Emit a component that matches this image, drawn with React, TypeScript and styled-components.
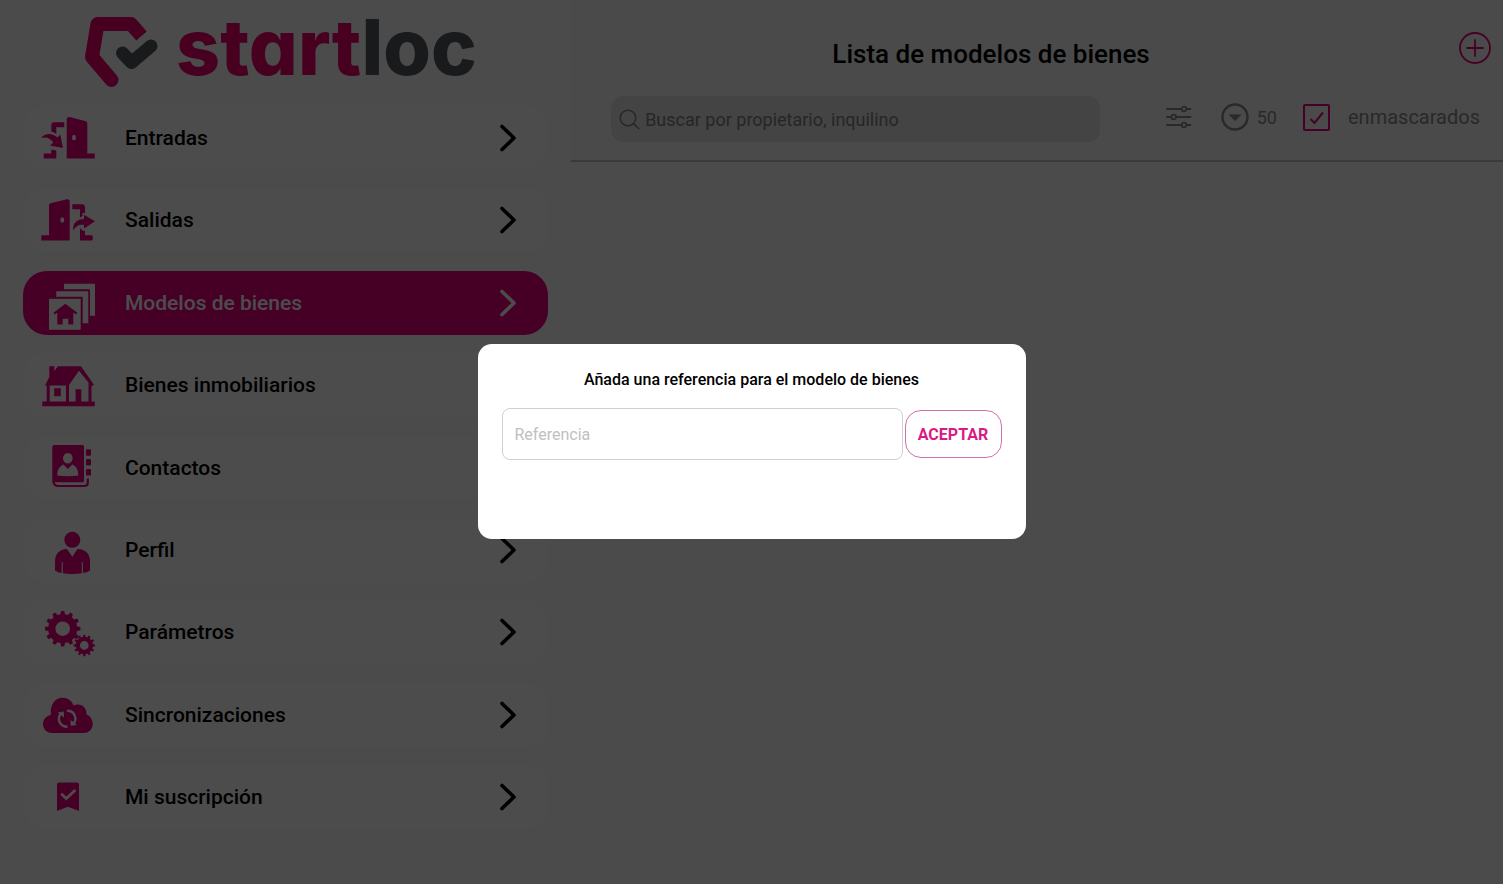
import React from "react";
import styled, { createGlobalStyle } from "styled-components";

const PINK = "#ea0080";
const LOGO_PINK = "#f0006e";
const SLATE = "#54585c";
const GRAY = "#8a8a8a";

const GlobalStyle = createGlobalStyle`
  * { box-sizing: border-box; }
  body { margin: 0; background: #fcfcfc; font-family: Roboto, "Liberation Sans", sans-serif; color: #000; }
  button, input { font-family: inherit; }
`;

const Page = styled.div`
  display: flex;
  min-height: 100vh;
`;

const Sidebar = styled.aside`
  display: flex;
  flex-direction: column;
  width: 38%;
  padding: 16px 23px 55px;
`;

const Logo = styled.div`
  display: flex;
  align-items: flex-start;
  gap: 18px;
  height: 90px;
  padding-left: 61px;
`;

const Wordmark = styled.span`
  font-family: Inter, sans-serif;
  font-size: 77px;
  line-height: 62px;
  font-weight: 800;
  font-feature-settings: "cv11";
  color: ${LOGO_PINK};
`;

const WordmarkEnd = styled.span`
  color: ${SLATE};
`;

const Menu = styled.nav`
  display: flex;
  flex: 1;
  flex-direction: column;
  justify-content: space-between;
`;

const MenuItem = styled.a<{ $active?: boolean }>`
  display: flex;
  align-items: center;
  gap: 28px;
  height: 64px;
  padding: 0 32px 0 18px;
  border-radius: 24px;
  font-size: 21px;
  font-weight: 500;
  text-decoration: none;
  color: ${(p) => (p.$active ? "#fff" : "#000")};
  background: ${(p) => (p.$active ? PINK : "#fff")};
`;

const MenuLabel = styled.span`
  flex: 1;
`;

const Main = styled.main`
  flex: 1;
  min-width: 0;
`;

const Header = styled.header`
  padding: 32px 0 18px;
  background: #f7f7f7;
  border-bottom: 2px solid #c4c4c4;
`;

const TitleRow = styled.div`
  display: flex;
  align-items: flex-start;
`;

const Title = styled.h1`
  flex: 1;
  margin: 0;
  padding-top: 6px;
  font-size: 26px;
  line-height: 32px;
  font-weight: 500;
  text-align: center;
`;

const AddSlot = styled.div`
  display: flex;
  justify-content: flex-end;
  width: 92px;
  padding-right: 12px;
`;

const IconButton = styled.button`
  display: flex;
  padding: 0;
  border: 0;
  background: none;
`;

const Filters = styled.div`
  display: flex;
  align-items: center;
  padding: 26px 23px 0 40px;
`;

const SearchBox = styled.label`
  display: flex;
  flex: 1;
  align-items: center;
  gap: 5px;
  height: 46px;
  padding: 0 8px;
  border-radius: 12px;
  background: #e4e4e4;
`;

const SearchInput = styled.input`
  flex: 1;
  min-width: 0;
  padding: 0;
  border: 0;
  outline: 0;
  background: none;
  font-size: 18px;
  &::placeholder { color: #808080; opacity: 1; }
`;

const FilterTools = styled.div`
  display: flex;
  align-items: center;
  height: 42px;
  margin: 0 0 4px 66px;
  color: ${GRAY};
`;

const PageSize = styled.button`
  display: flex;
  align-items: center;
  gap: 8px;
  margin: 0 26px 0 29px;
  padding: 0;
  border: 0;
  background: none;
  font-size: 18px;
  color: ${GRAY};
`;

const MaskLabel = styled.label`
  display: flex;
  align-items: center;
  gap: 18px;
  font-size: 20px;
`;

const CheckHolder = styled.span`
  display: grid;
  width: 27px;
  height: 27px;
  > * { grid-area: 1 / 1; }
`;

const CheckInput = styled.input`
  appearance: none;
  width: 27px;
  height: 27px;
  margin: 0;
  border: 2px solid ${PINK};
  border-radius: 2px;
`;

const Overlay = styled.div`
  position: fixed;
  inset: 0;
  display: flex;
  align-items: center;
  justify-content: center;
  padding-bottom: 2px;
  background: rgba(0, 0, 0, 0.7);
`;

const Dialog = styled.form`
  width: 548px;
  max-width: 92vw;
  padding: 24px 24px 79px;
  border-radius: 14px;
  background: #fff;
`;

const DialogTitle = styled.h2`
  margin: 0 0 16px;
  font-size: 16px;
  line-height: 24px;
  font-weight: 500;
  text-align: center;
`;

const DialogRow = styled.div`
  display: flex;
  align-items: center;
  gap: 2px;
`;

const ReferenceInput = styled.input`
  flex: 1;
  min-width: 0;
  height: 52px;
  padding: 2px 12px 0;
  border: 1px solid #d0d0d0;
  border-radius: 8px;
  outline: 0;
  font-size: 16px;
  &::placeholder { color: #c0c0c0; opacity: 1; }
`;

const AcceptButton = styled.button`
  width: 97px;
  height: 48px;
  padding: 2px 0 0;
  border: 1px solid #cf6fae;
  border-radius: 16px;
  background: #fff;
  font-size: 16px;
  font-weight: 700;
  color: #d81b84;
`;

const MenuSvg = ({ children }: { children: React.ReactNode }) => (
  <svg width="56" height="56" viewBox="0 -4 56 56" aria-hidden="true">{children}</svg>
);

function gear(cx: number, cy: number, outer: number, root: number, hole: number, teeth: number) {
  const points: string[] = [];
  const step = (Math.PI * 2) / teeth;
  for (let i = 0; i < teeth; i++) {
    const a = i * step;
    const corners: [number, number][] = [[root, -0.3], [outer, -0.17], [outer, 0.17], [root, 0.3]];
    for (const [r, k] of corners) {
      points.push(`${(cx + r * Math.cos(a + k * step)).toFixed(2)} ${(cy + r * Math.sin(a + k * step)).toFixed(2)}`);
    }
  }
  return `M${points.join("L")}Z M${cx - hole} ${cy}a${hole} ${hole} 0 1 0 ${hole * 2} 0a${hole} ${hole} 0 1 0 ${-hole * 2} 0Z`;
}

const EntryIcon = () => (
  <MenuSvg>
    <g fill={PINK}>
      <path fillRule="evenodd" d="M25.7 5Q26 2.8 28.5 3L45 7.2Q46.3 7.7 46.3 9V39.5H53.7V44.5H25.7ZM31 23.5a2 2.7 0 1 0 4 0a2 2.7 0 1 0-4 0Z" />
      <path d="M23.3 8.2V13.2H15.3V20Q13 18 10.3 17.5V11Q10.3 8.2 13.2 8.2Z" />
      <path d="M0 24C4 18.5 12 19 16.3 23.5L19.3 20.5L22 34L9 31.5L12.3 28.5C9 24 5 22.5 0 24Z" />
      <path d="M10.3 35.5L15.3 36.5V44.5H2.7V40.5Q2.7 39.5 4 39.5H10.3Z" />
    </g>
  </MenuSvg>
);

const ExitIcon = () => (
  <MenuSvg>
    <g fill={PINK}>
      <path fillRule="evenodd" d="M8 9Q8 7.7 9.5 7.3L26 3.2Q28.7 3 28.7 5.5V44.5H.3V40.3Q.3 39.3 1.3 39.3H8ZM19.3 24a2 2.7 0 1 0 4 0a2 2.7 0 1 0-4 0Z" />
      <path d="M31.3 8.3H41Q44 8.3 44 11.3V17H41.5V20L39 21.5V13.3H31.3Z" />
      <path d="M32.3 34.5C31.5 27 36 23 43 23V18.7L54 25.3L43 32.6V28.8C37.5 28.5 34.5 30.5 32.3 34.5Z" />
      <path d="M39 32L41.5 34.5L44 35V39.3H50.7Q51.7 39.3 51.7 40.3V43.5Q51.7 44.5 50.7 44.5H39Z" />
    </g>
  </MenuSvg>
);

const ModelsIcon = () => (
  <MenuSvg>
    <g fill="#fff">
      <path d="M23 4.8H54V36.8H49V10.2H23Z" />
      <path d="M15.3 12.2H47.3V44.2H41.7V17.8H15.3Z" />
      <path d="M8 19.8H39.7V50.8H8Z" />
    </g>
    <path fill={PINK} d="M24.3 24.8L36.3 33.7L35 35.4L32.3 33.8V45.6H27.3V39.8H21.7V45.6H16.3V33.8L13.7 35.4L12.5 33.7Z" />
  </MenuSvg>
);

const HouseIcon = () => (
  <MenuSvg>
    <g fill={PINK}>
      <path fillRule="evenodd" d="M8.3 5.3H13.3V10L17 5.3H40L52.8 23.5L51 25.3L50.5 24.6V40.6H53.7V45.3H1.3V40.6H5.7V24.4H4L8.3 16ZM8.7 24.5V40.6H25V24.5ZM28 24V40.6H47.5V21.5L38 9.8Z" />
      <path d="M13.2 27.2H19.8V35.2H13.2ZM34.6 28.3H40.3V41H34.6Z" />
    </g>
  </MenuSvg>
);

const ContactsIcon = () => (
  <MenuSvg>
    <g fill={PINK}>
      <path d="M11.3 3Q11.3 .9 13.4 .9H41.5Q43 .9 43 2.4V36.7Q43 38.2 41.5 38.2H11.3Z" />
      <rect x="45" y="5.2" width="5" height="6.6" rx="1" />
      <rect x="45" y="15" width="5" height="6.6" rx="1" />
      <rect x="45" y="25" width="5" height="6.6" rx="1" />
    </g>
    <path d="M12.4 36.5Q12.4 42 17 42H43Q46.8 42 46.8 38.5V34.5" fill="none" stroke={PINK} strokeWidth="2.2" />
    <g fill="#fff">
      <ellipse cx="26.8" cy="14.2" rx="4.8" ry="5.2" />
      <path d="M22.5 20.5L26.8 25L31.3 20.5C35.5 22.5 37.3 25.5 37.3 31.5Q27 33 16.3 31.5C16.3 25.5 18.5 22.5 22.5 20.5Z" />
    </g>
  </MenuSvg>
);

const ProfileIcon = () => (
  <MenuSvg>
    <circle cx="31.3" cy="13.8" r="8" fill={PINK} />
    <path fill={PINK} d="M26 23.1L31.3 30.8L36.5 23.1C45 23.5 49 28 49 36V44.5Q46 46.5 42 47L41.8 36H40.8V47.3Q31 48.8 21.8 47.3V36H20.8L20.6 47Q17 46.5 14 44.5V36C14 28 18 23.5 26 23.1Z" />
  </MenuSvg>
);

const SettingsIcon = () => (
  <MenuSvg>
    <g fill={PINK} fillRule="evenodd">
      <path d={gear(21.7, 20.7, 17.8, 14.6, 7.3, 12)} />
      <path d={gear(43.3, 37.4, 10.8, 8.6, 4.3, 12)} />
    </g>
  </MenuSvg>
);

const SyncIcon = () => (
  <MenuSvg>
    <path fill={PINK} d="M11 42C5 42 2 37.5 2 33C2 28.5 5.5 24.5 10 24C8.5 14 14 6.7 21.5 6.7C27 6.7 31 10 32.6 14.5C39.5 11.5 46 16 45.5 23.5C49.5 25 51.7 29 51.7 33C51.7 37.5 48.5 42 43 42Z" />
    <g fill="none" stroke="#fff" strokeWidth="2.4">
      <path d="M26.5 35.8C18.5 35.8 15.5 27.5 20 22.5" />
      <path d="M26 19.8C34 19.8 36.5 28 32.3 33" />
    </g>
    <path fill="#fff" d="M16.7 21.5L22.8 20.5L23 26.5ZM35.8 34L29.7 34.8L29.6 29Z" />
  </MenuSvg>
);

const SubscriptionIcon = () => (
  <MenuSvg>
    <path fill={PINK} d="M16 11.6Q16 9.6 18 9.6H36Q38 9.6 38 11.6V38L26.9 33.7L16 38Z" />
    <path d="M20.2 20.7L25.3 25.5L34.3 17" fill="none" stroke="#fff" strokeWidth="2.8" />
  </MenuSvg>
);

const Chevron = () => (
  <svg width="16" height="28" viewBox="0 0 16 28" fill="none" stroke="currentColor" strokeWidth="3.6" strokeLinecap="round" strokeLinejoin="round" aria-hidden="true">
    <path d="M2 2.5L14 14L2 25.5" />
  </svg>
);

const items = [
  { label: "Entradas", Icon: EntryIcon },
  { label: "Salidas", Icon: ExitIcon },
  { label: "Modelos de bienes", Icon: ModelsIcon, active: true },
  { label: "Bienes inmobiliarios", Icon: HouseIcon },
  { label: "Contactos", Icon: ContactsIcon },
  { label: "Perfil", Icon: ProfileIcon },
  { label: "Parámetros", Icon: SettingsIcon },
  { label: "Sincronizaciones", Icon: SyncIcon },
  { label: "Mi suscripción", Icon: SubscriptionIcon },
];

export default function App() {
  return (
    <>
      <GlobalStyle />
      <Page>
        <Sidebar>
          <Logo>
            <svg width="74" height="72" viewBox="84 16 74 72" fill="none" strokeWidth="14" aria-hidden="true">
              <path d="M141.5 36L131 24H97.5L92 57" stroke={LOGO_PINK} strokeLinejoin="round" />
              <path d="M92 57L111.5 80" stroke={LOGO_PINK} strokeLinecap="round" />
              <path d="M122.5 53L131.5 62.5L151 46" stroke={SLATE} strokeWidth="13" strokeLinecap="round" strokeLinejoin="round" />
            </svg>
            <Wordmark>start<WordmarkEnd>loc</WordmarkEnd></Wordmark>
          </Logo>
          <Menu>
            {items.map(({ label, Icon, active }) => (
              <MenuItem key={label} href="#" $active={active} aria-current={active ? "page" : undefined}>
                <Icon />
                <MenuLabel>{label}</MenuLabel>
                <Chevron />
              </MenuItem>
            ))}
          </Menu>
        </Sidebar>
        <Main>
          <Header>
            <TitleRow>
              <Title>Lista de modelos de bienes</Title>
              <AddSlot>
                <IconButton type="button" aria-label="Añadir">
                  <svg width="32" height="32" viewBox="0 0 32 32" fill="none" stroke={PINK} strokeWidth="1.8" strokeLinecap="round">
                    <circle cx="16" cy="16" r="15" />
                    <path d="M16 8V24M8 16H24" />
                  </svg>
                </IconButton>
              </AddSlot>
            </TitleRow>
            <Filters>
              <SearchBox>
                <svg width="21" height="21" viewBox="0 0 21 21" fill="none" stroke="#808080" strokeWidth="1.5" strokeLinecap="round" aria-hidden="true">
                  <circle cx="9" cy="9" r="7.8" />
                  <path d="M14.6 14.6L19.8 19.8" />
                </svg>
                <SearchInput type="search" aria-label="Buscar" placeholder="Buscar por propietario, inquilino" />
              </SearchBox>
              <FilterTools>
                <IconButton type="button" aria-label="Filtros">
                  <svg width="26" height="24" viewBox="0 0 26 24" fill="none" stroke={GRAY} strokeWidth="1.8" strokeLinecap="round">
                    <path d="M1 4H15.5M20.5 4H24.5M1 12H5.2M10.2 12H24.5M1 20H15.5M20.5 20H24.5" />
                    <circle cx="18" cy="4" r="2.3" />
                    <circle cx="7.7" cy="12" r="2.3" />
                    <circle cx="18" cy="20" r="2.3" />
                  </svg>
                </IconButton>
                <PageSize type="button">
                  <svg width="28" height="28" viewBox="0 0 28 28" aria-hidden="true">
                    <circle cx="14" cy="14" r="12.5" fill="none" stroke={GRAY} strokeWidth="2.4" />
                    <path d="M7.5 11.5H20.5L14 18Z" fill={GRAY} />
                  </svg>
                  50
                </PageSize>
                <MaskLabel>
                  <CheckHolder>
                    <CheckInput type="checkbox" defaultChecked />
                    <svg width="27" height="27" viewBox="0 0 27 27" fill="none" stroke={PINK} strokeWidth="2" pointerEvents="none" aria-hidden="true">
                      <path d="M7.5 15L11.5 19L20 8.5" />
                    </svg>
                  </CheckHolder>
                  enmascarados
                </MaskLabel>
              </FilterTools>
            </Filters>
          </Header>
        </Main>
      </Page>
      <Overlay>
        <Dialog role="dialog" aria-modal="true" aria-labelledby="dialog-title" onSubmit={(e) => e.preventDefault()}>
          <DialogTitle id="dialog-title">Añada una referencia para el modelo de bienes</DialogTitle>
          <DialogRow>
            <ReferenceInput aria-label="Referencia" placeholder="Referencia" />
            <AcceptButton type="submit">ACEPTAR</AcceptButton>
          </DialogRow>
        </Dialog>
      </Overlay>
    </>
  );
}
